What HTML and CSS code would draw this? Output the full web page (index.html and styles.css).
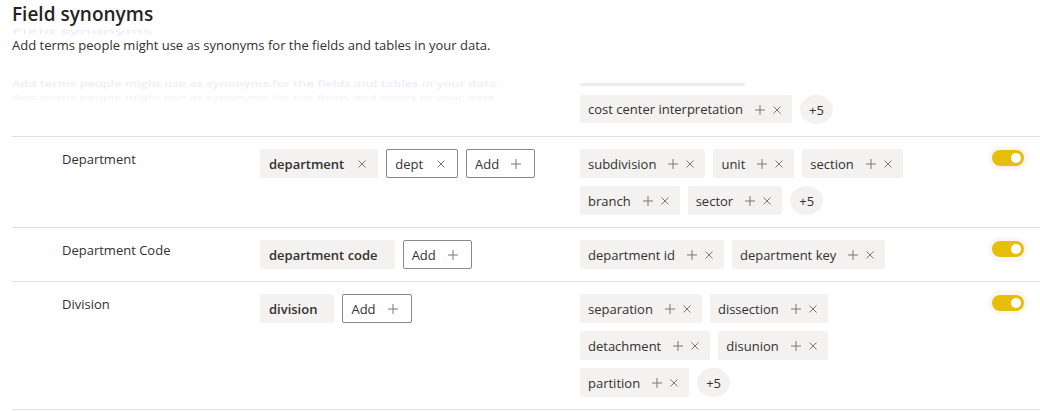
FILE: index.html
```html
<!DOCTYPE html>
<html lang="en">
<head>
<meta charset="utf-8">
<title>Field synonyms</title>
<link rel="stylesheet" href="styles.css">
</head>
<body>
<div class="page">
  <header class="head">
    <h1 class="title">Field synonyms</h1>
    <div class="ghost-title"><span>Field synonyms</span></div>
    <p class="desc">Add terms people might use as synonyms for the fields and tables in your data.</p>
  </header>

  <div class="row-partial">
    <div class="ghost-desc">
      <div class="ghost-line g1"><span>Add terms people might use as synonyms for the fields and tables in your data.</span></div>
      <div class="ghost-line g2"><span>Add terms people might use as synonyms for the fields and tables in your data.</span></div>
    </div>
    <div class="syns-partial">
      <div class="skeleton"></div>
      <div class="chips">
        <span class="chip syn">cost center interpretation<svg class="ic plus" viewBox="0 0 10 10"><path d="M5 0V10M0 5H10"/></svg><svg class="ic x" viewBox="0 0 8 8"><path d="M0.5 0.5L7.5 7.5M7.5 0.5L0.5 7.5"/></svg></span>
        <span class="more">+5</span>
      </div>
    </div>
  </div>

  <div class="row">
    <div class="label">Department</div>
    <div class="chips">
      <span class="chip term">department<svg class="ic x" viewBox="0 0 8 8"><path d="M0.5 0.5L7.5 7.5M7.5 0.5L0.5 7.5"/></svg></span>
      <span class="chip outline">dept<svg class="ic x" viewBox="0 0 8 8"><path d="M0.5 0.5L7.5 7.5M7.5 0.5L0.5 7.5"/></svg></span>
      <span class="chip outline add">Add<svg class="ic plus" viewBox="0 0 10 10"><path d="M5 0V10M0 5H10"/></svg></span>
    </div>
    <div class="chips">
      <span class="chip syn">subdivision<svg class="ic plus" viewBox="0 0 10 10"><path d="M5 0V10M0 5H10"/></svg><svg class="ic x" viewBox="0 0 8 8"><path d="M0.5 0.5L7.5 7.5M7.5 0.5L0.5 7.5"/></svg></span>
      <span class="chip syn">unit<svg class="ic plus" viewBox="0 0 10 10"><path d="M5 0V10M0 5H10"/></svg><svg class="ic x" viewBox="0 0 8 8"><path d="M0.5 0.5L7.5 7.5M7.5 0.5L0.5 7.5"/></svg></span>
      <span class="chip syn">section<svg class="ic plus" viewBox="0 0 10 10"><path d="M5 0V10M0 5H10"/></svg><svg class="ic x" viewBox="0 0 8 8"><path d="M0.5 0.5L7.5 7.5M7.5 0.5L0.5 7.5"/></svg></span>
      <span class="chip syn">branch<svg class="ic plus" viewBox="0 0 10 10"><path d="M5 0V10M0 5H10"/></svg><svg class="ic x" viewBox="0 0 8 8"><path d="M0.5 0.5L7.5 7.5M7.5 0.5L0.5 7.5"/></svg></span>
      <span class="chip syn">sector<svg class="ic plus" viewBox="0 0 10 10"><path d="M5 0V10M0 5H10"/></svg><svg class="ic x" viewBox="0 0 8 8"><path d="M0.5 0.5L7.5 7.5M7.5 0.5L0.5 7.5"/></svg></span>
      <span class="more">+5</span>
    </div>
    <div class="toggle"><span class="knob"></span></div>
  </div>

  <div class="row">
    <div class="label">Department Code</div>
    <div class="chips">
      <span class="chip term solo">department code</span>
      <span class="chip outline add">Add<svg class="ic plus" viewBox="0 0 10 10"><path d="M5 0V10M0 5H10"/></svg></span>
    </div>
    <div class="chips">
      <span class="chip syn">department id<svg class="ic plus" viewBox="0 0 10 10"><path d="M5 0V10M0 5H10"/></svg><svg class="ic x" viewBox="0 0 8 8"><path d="M0.5 0.5L7.5 7.5M7.5 0.5L0.5 7.5"/></svg></span>
      <span class="chip syn">department key<svg class="ic plus" viewBox="0 0 10 10"><path d="M5 0V10M0 5H10"/></svg><svg class="ic x" viewBox="0 0 8 8"><path d="M0.5 0.5L7.5 7.5M7.5 0.5L0.5 7.5"/></svg></span>
    </div>
    <div class="toggle"><span class="knob"></span></div>
  </div>

  <div class="row last">
    <div class="label">Division</div>
    <div class="chips">
      <span class="chip term solo">division</span>
      <span class="chip outline add">Add<svg class="ic plus" viewBox="0 0 10 10"><path d="M5 0V10M0 5H10"/></svg></span>
    </div>
    <div class="chips narrow">
      <span class="chip syn">separation<svg class="ic plus" viewBox="0 0 10 10"><path d="M5 0V10M0 5H10"/></svg><svg class="ic x" viewBox="0 0 8 8"><path d="M0.5 0.5L7.5 7.5M7.5 0.5L0.5 7.5"/></svg></span>
      <span class="chip syn">dissection<svg class="ic plus" viewBox="0 0 10 10"><path d="M5 0V10M0 5H10"/></svg><svg class="ic x" viewBox="0 0 8 8"><path d="M0.5 0.5L7.5 7.5M7.5 0.5L0.5 7.5"/></svg></span>
      <span class="chip syn">detachment<svg class="ic plus" viewBox="0 0 10 10"><path d="M5 0V10M0 5H10"/></svg><svg class="ic x" viewBox="0 0 8 8"><path d="M0.5 0.5L7.5 7.5M7.5 0.5L0.5 7.5"/></svg></span>
      <span class="chip syn">disunion<svg class="ic plus" viewBox="0 0 10 10"><path d="M5 0V10M0 5H10"/></svg><svg class="ic x" viewBox="0 0 8 8"><path d="M0.5 0.5L7.5 7.5M7.5 0.5L0.5 7.5"/></svg></span>
      <span class="chip syn">partition<svg class="ic plus" viewBox="0 0 10 10"><path d="M5 0V10M0 5H10"/></svg><svg class="ic x" viewBox="0 0 8 8"><path d="M0.5 0.5L7.5 7.5M7.5 0.5L0.5 7.5"/></svg></span>
      <span class="more">+5</span>
    </div>
    <div class="toggle"><span class="knob"></span></div>
  </div>
</div>
</body>
</html>
```

FILE: styles.css
```css
* { box-sizing: border-box; }

html, body {
  margin: 0;
  padding: 0;
  background: #ffffff;
}

body {
  font-family: "Open Sans", "Noto Sans", "Liberation Sans", sans-serif;
  font-size: 13px;
  color: #323130;
}

.page {
  width: 1040px;
  padding-left: 12px;
}

.head {
  display: flex;
  flex-direction: column;
}

.title {
  margin: 0;
  font-size: 19px;
  line-height: 28px;
  font-weight: 600;
  color: #252423;
}

.ghost-title {
  height: 7px;
  color: #f1ebfc;
  font-size: 7px;
  line-height: 7px;
  font-weight: 600;
}

.ghost-title span {
  display: block;
  width: max-content;
  transform: scaleX(2.7);
  transform-origin: 0 0;
}

.desc {
  margin: 0;
  font-size: 13px;
  line-height: 20px;
  color: #323130;
}

.row-partial {
  display: flex;
  padding-bottom: 12px;
}

.ghost-desc {
  width: 568px;
  padding-top: 22px;
  display: flex;
  flex-direction: column;
}

.ghost-line {
  white-space: nowrap;
}

.ghost-line span {
  display: block;
  width: max-content;
  transform-origin: 0 0;
}

.ghost-line.g1 {
  height: 13px;
  color: #f0ecfd;
  font-size: 12.8px;
  font-weight: 600;
  line-height: 17px;
}

.ghost-line.g1 span {
  transform: scaleY(0.75);
}

.ghost-line.g2 {
  margin-top: 2px;
  height: 9px;
  color: #f3f1fc;
  font-size: 8px;
  line-height: 9px;
}

.ghost-line.g2 span {
  transform: scaleX(1.65);
}

.syns-partial {
  width: 412px;
  padding-top: 28px;
  display: flex;
  flex-direction: column;
}

.skeleton {
  width: 165px;
  height: 3px;
  border-radius: 2px;
  background: #ececec;
  margin-bottom: 9px;
}

.row {
  display: grid;
  grid-template-columns: 198px 320px 412px 32px;
  align-items: start;
  padding: 12px 16px 12px 50px;
  border-top: 1px solid #e1dfdd;
}

.row.last {
  border-bottom: 1px solid #e1dfdd;
}

.label {
  line-height: 20px;
  font-size: 13px;
  color: #323130;
}

.chips {
  display: flex;
  flex-wrap: wrap;
  gap: 8px 8px;
  align-items: flex-start;
}

.chips.narrow {
  width: 260px;
}

.chip {
  display: inline-flex;
  align-items: center;
  height: 29px;
  padding: 0 11px 0 8px;
  background: #f3f2f1;
  border-radius: 2px;
  font-size: 13px;
  line-height: 18px;
  color: #323130;
  white-space: nowrap;
}

.syns-partial .chip {
  height: 28px;
}

.chip.term {
  font-weight: 600;
  padding: 0 12px 0 9px;
}

.chip.term.solo {
  padding-right: 17px;
}

.chip.outline {
  background: #ffffff;
  border: 1px solid #8a8886;
  padding: 0 12px 0 8px;
}

.chip.outline.add {
  padding-right: 13px;
}

.ic {
  flex: none;
  fill: none;
  stroke: #7a7876;
  stroke-width: 1;
  margin-top: 1px;
}

.ic.plus {
  width: 10px;
  height: 10px;
  margin-left: 12px;
}

.ic.x {
  width: 8px;
  height: 8px;
  margin-left: 8px;
}

.term .ic.x,
.outline .ic.x {
  margin-left: 14px;
}

.more {
  display: inline-flex;
  align-items: center;
  justify-content: center;
  width: 33px;
  height: 29px;
  border-radius: 50%;
  background: #f3f2f1;
  font-size: 13px;
  color: #323130;
}

.toggle {
  position: relative;
  width: 32px;
  height: 16px;
  margin-top: 1px;
  border-radius: 8px;
  background: #e5bf0a;
  box-shadow: 0 0 0 4px #fff5f7;
}

.knob {
  position: absolute;
  right: 3px;
  top: 3px;
  width: 10px;
  height: 10px;
  border-radius: 50%;
  background: #ffffff;
}
```
